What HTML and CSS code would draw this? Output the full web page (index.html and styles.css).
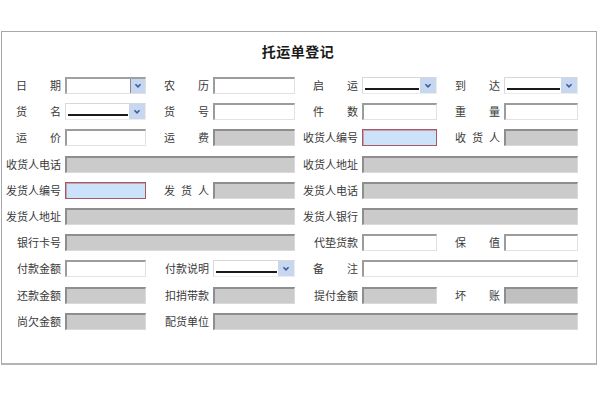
FILE: index.html
```html
<!DOCTYPE html>
<html lang="zh">
<head>
<meta charset="utf-8">
<title>托运单登记</title>
<link rel="stylesheet" href="styles.css">
</head>
<body>
<div class="panel">
  <h1 class="title">托运单登记</h1>
  <div class="form">
    <!-- row 1 -->
    <div class="lb"><span class="j">日期</span></div>
    <div class="sel"><span class="arrow"><svg viewBox="0 0 14 14"><polyline points="4,5 7,8 10,5"/></svg></span></div>
    <div class="lb"><span class="j">农历</span></div>
    <div class="f white"></div>
    <div class="lb"><span class="j">启运</span></div>
    <div class="sel line"><span class="arrow"><svg viewBox="0 0 14 14"><polyline points="4,5 7,8 10,5"/></svg></span></div>
    <div class="lb"><span class="j">到达</span></div>
    <div class="sel line"><span class="arrow"><svg viewBox="0 0 14 14"><polyline points="4,5 7,8 10,5"/></svg></span></div>
    <!-- row 2 -->
    <div class="lb"><span class="j">货名</span></div>
    <div class="sel line"><span class="arrow"><svg viewBox="0 0 14 14"><polyline points="4,5 7,8 10,5"/></svg></span></div>
    <div class="lb"><span class="j">货号</span></div>
    <div class="f white"></div>
    <div class="lb"><span class="j">件数</span></div>
    <div class="f white"></div>
    <div class="lb"><span class="j">重量</span></div>
    <div class="f white"></div>
    <!-- row 3 -->
    <div class="lb"><span class="j">运价</span></div>
    <div class="f white"></div>
    <div class="lb"><span class="j">运费</span></div>
    <div class="f gray"></div>
    <div class="lb">收货人编号</div>
    <div class="f blue"></div>
    <div class="lb"><span class="j">收货人</span></div>
    <div class="f gray"></div>
    <!-- row 4 -->
    <div class="lb">收货人电话</div>
    <div class="f gray span3"></div>
    <div class="lb">收货人地址</div>
    <div class="f gray span3"></div>
    <!-- row 5 -->
    <div class="lb">发货人编号</div>
    <div class="f blue"></div>
    <div class="lb"><span class="j">发货人</span></div>
    <div class="f gray"></div>
    <div class="lb">发货人电话</div>
    <div class="f gray span3"></div>
    <!-- row 6 -->
    <div class="lb">发货人地址</div>
    <div class="f gray span3"></div>
    <div class="lb">发货人银行</div>
    <div class="f gray span3"></div>
    <!-- row 7 -->
    <div class="lb">银行卡号</div>
    <div class="f gray span3"></div>
    <div class="lb">代垫货款</div>
    <div class="f white"></div>
    <div class="lb"><span class="j">保值</span></div>
    <div class="f white"></div>
    <!-- row 8 -->
    <div class="lb">付款金额</div>
    <div class="f white"></div>
    <div class="lb">付款说明</div>
    <div class="sel line"><span class="arrow"><svg viewBox="0 0 14 14"><polyline points="4,5 7,8 10,5"/></svg></span></div>
    <div class="lb"><span class="j">备注</span></div>
    <div class="f white span3"></div>
    <!-- row 9 -->
    <div class="lb">还款金额</div>
    <div class="f gray"></div>
    <div class="lb">扣捎带款</div>
    <div class="f gray"></div>
    <div class="lb">提付金额</div>
    <div class="f gray"></div>
    <div class="lb"><span class="j">坏账</span></div>
    <div class="f gray dark"></div>
    <!-- row 10 -->
    <div class="lb">尚欠金额</div>
    <div class="f gray"></div>
    <div class="lb">配货单位</div>
    <div class="f gray span5"></div>
  </div>
</div>
</body>
</html>
```

FILE: styles.css
```css
html, body {
  margin: 0;
  padding: 0;
  background: #ffffff;
}

body {
  font-family: "Noto Sans CJK SC", "Liberation Sans", sans-serif;
  color: #3a3a3a;
}

.panel {
  margin: 31px 0 0 1px;
  width: 596px;
  height: 334px;
  box-sizing: border-box;
  border: 1px solid #a8a8a8;
  border-bottom: 2px solid #b4b4b4;
  background: #ffffff;
  padding-top: 9px;
}

.title {
  margin: 0;
  height: 20px;
  line-height: 20px;
  font-size: 14px;
  font-weight: bold;
  letter-spacing: 0.5px;
  text-align: center;
  color: #1a1a1a;
  padding-right: 2px;
}

.form {
  margin-top: 16px;
  display: grid;
  grid-template-columns: 63px 81px 67px 82px 67px 75px 67px 74px;
  grid-auto-rows: 17px;
  row-gap: 9.2px;
}

.lb {
  display: flex;
  align-items: center;
  justify-content: flex-end;
  padding-right: 4px;
  font-size: 11px;
  line-height: 11px;
  white-space: nowrap;
}

.j {
  display: inline-block;
  width: 45px;
  text-align: justify;
  text-align-last: justify;
}

.f {
  box-sizing: border-box;
  border-style: solid;
  border-width: 2px 1px 1px 2px;
  border-color: #9c9c9c #e2e2e2 #e2e2e2 #9c9c9c;
}

.white { background: #ffffff; }

.gray {
  background: #cbcbcb;
  border-color: #8e8e8e #dadada #dadada #8e8e8e;
}

.gray.dark { background: #c0c0c0; }

.blue {
  background: #cce2fb;
  border: 1px solid #a45a66;
  box-shadow: inset 1px 1px 0 #c7a0a8;
}

.span3 { grid-column: span 3; }
.span5 { grid-column: span 5; }

.sel {
  position: relative;
  box-sizing: border-box;
  background: #ffffff;
  border-style: solid;
  border-width: 2px 1px 1px 2px;
  border-color: #a0a0a0 #e0e0e0 #e0e0e0 #a0a0a0;
  display: flex;
  justify-content: flex-end;
}

.sel .arrow {
  width: 14px;
  height: 100%;
  background: #c6d7ef;
  border-left: 1px solid #8a8a8a;
  display: flex;
  align-items: center;
  justify-content: center;
}

.sel.line {
  border-color: #d8d8d8 #ececec #ececec #d8d8d8;
  border-width: 1px;
}

.sel.line::before {
  content: "";
  position: absolute;
  left: 2px;
  right: 17px;
  bottom: 3px;
  height: 2px;
  background: #1a1a1a;
}

.sel.line .arrow {
  border-left: none;
  width: 16px;
}

.arrow svg {
  width: 12px;
  height: 12px;
}

.arrow polyline {
  fill: none;
  stroke: #3c5c9c;
  stroke-width: 1.8;
}
```
